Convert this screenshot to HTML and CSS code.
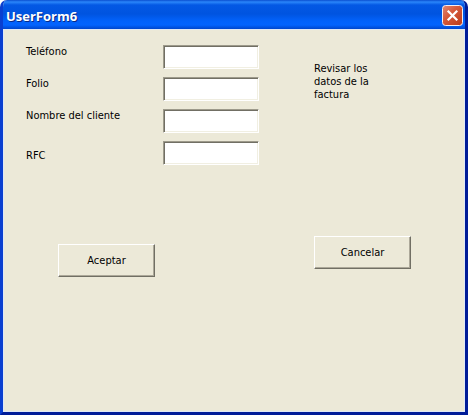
FILE: index.html
```html
<!DOCTYPE html>
<html lang="es">

<head>
    <meta charset="utf-8">
    <meta name="viewport" content="width=device-width, initial-scale=1.0">

    <title>UserForm6</title>

    <link rel="stylesheet" href="styles.css">
</head>

<body>
    <div class="window">
        <header class="title-bar">
            <h1>UserForm6</h1>
            <button type="button" class="close" aria-label="Cerrar">
                <svg width="21" height="21" viewBox="0 0 21 21" aria-hidden="true">
                    <defs>
                        <linearGradient id="red" x1="0" y1="0" x2="1" y2="1">
                            <stop offset="0" stop-color="#e08a76" />
                            <stop offset="0.4" stop-color="#d65a3c" />
                            <stop offset="1" stop-color="#bb3a18" />
                        </linearGradient>
                    </defs>
                    <rect x="0.5" y="0.5" width="20" height="20" rx="3" fill="url(#red)" stroke="#f4eef2" />
                    <path d="M6.5 6.5l8 8M14.5 6.5l-8 8" stroke="#fff" stroke-width="2.2" stroke-linecap="square" />
                </svg>
            </button>
        </header>

        <form class="content">
            <div class="fields">
                <label for="telefono">Teléfono</label>
                <input type="text" id="telefono" name="telefono">

                <label for="folio">Folio</label>
                <input type="text" id="folio" name="folio">

                <label for="cliente">Nombre del cliente</label>
                <input type="text" id="cliente" name="cliente">

                <label for="rfc" class="low">RFC</label>
                <input type="text" id="rfc" name="rfc">
            </div>

            <p class="note">Revisar los datos de la factura</p>

            <button type="button" class="btn accept">Aceptar</button>
            <button type="button" class="btn">Cancelar</button>
        </form>
    </div>
</body>

</html>
```

FILE: styles.css
```css
* {
    margin: 0;
    padding: 0;
    box-sizing: border-box;
}

body {
    background-color: #fff;
    color: #000;
    font: 11px/13px Tahoma, "DejaVu Sans Condensed", sans-serif;
}

input,
button {
    font: inherit;
    color: inherit;
}

.window {
    display: flex;
    flex-direction: column;
    min-height: 100vh;
    border: 3px solid #0a3fd0;
    border-top: 0;
    border-right-color: #001c98;
    border-bottom-color: #001c98;
    border-radius: 7px 7px 0 0;
    background-color: #ece9d8;
    overflow: hidden;
}

.title-bar {
    display: flex;
    align-items: center;
    justify-content: space-between;
    height: 29px;
    padding: 2px 2px 0 3px;
    background: linear-gradient(#0a4fd0 0, #2a86fa 2px, #0358e4 5px, #0054e0 14px, #0262fb 21px, #0364fe 25px, #0046cc 29px);
}

.title-bar h1 {
    color: #fff;
    font: bold 13px/16px "Trebuchet MS", "Open Sans", sans-serif;
    text-shadow: 1px 1px #0b2a86;
}

.close {
    width: 21px;
    height: 21px;
    border: 0;
    background: none;
}

.close svg {
    display: block;
}

.content {
    flex: 1;
    display: grid;
    grid-template-columns: 288px 1fr;
    align-content: start;
    row-gap: 71px;
    padding: 15px 22px;
    border: 1px solid #dfe8f6;
}

.fields {
    display: grid;
    grid-template-columns: 137px 96px;
    row-gap: 8px;
}

.low {
    padding-top: 8px;
}

.fields input {
    width: 100%;
    height: 24px;
    padding: 0 3px;
    border: 1px solid;
    border-color: #9d9a8b #fff #fff #9d9a8b;
    background-color: #fff;
    box-shadow: inset 1px 1px #716f64, inset -1px -1px #f1efe2;
}

.note {
    width: 64px;
    margin-top: 17px;
}

.btn {
    width: 97px;
    height: 33px;
    border: 1px solid;
    border-color: #fff #716f64 #716f64 #fff;
    background-color: #ece9d8;
    box-shadow: inset -1px -1px #aca899;
}

.accept {
    margin: 8px 0 0 32px;
}
```
